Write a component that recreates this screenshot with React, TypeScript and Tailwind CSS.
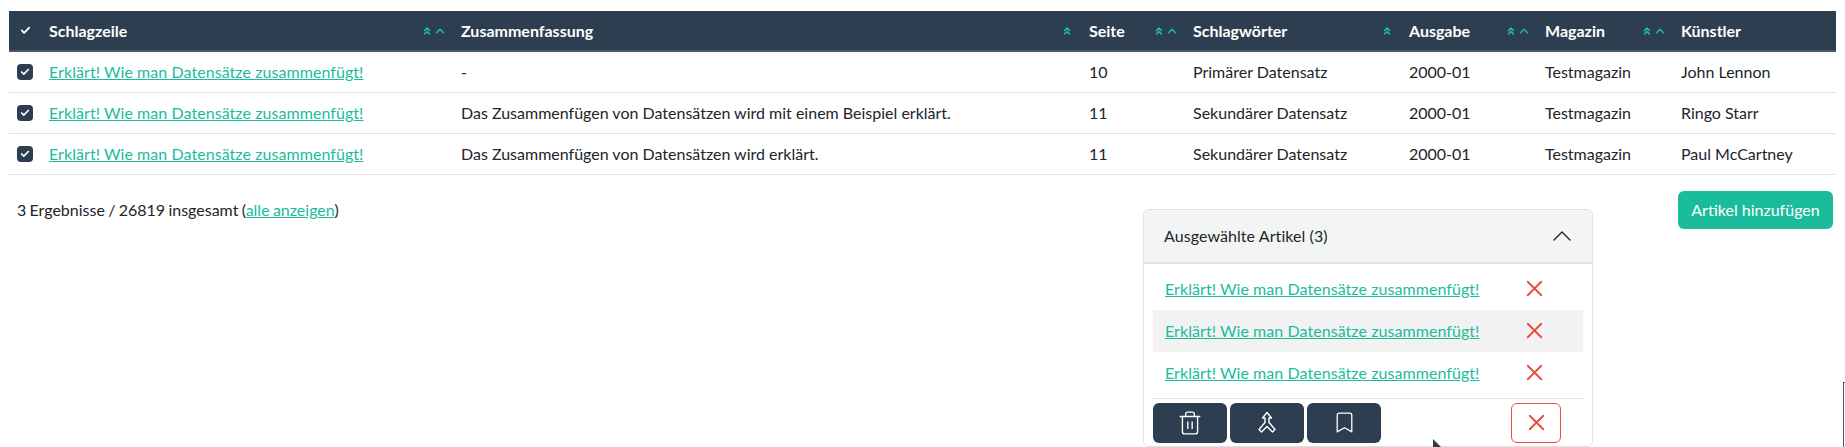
// @ts-nocheck
import React from 'react';
import { Check, ChevronUp, ChevronsUp, Trash2, Bookmark, X } from 'lucide-react';

const rows = [
  { summary: '-', page: '10', tag: 'Primärer Datensatz', artist: 'John Lennon' },
  { summary: 'Das Zusammenfügen von Datensätzen wird mit einem Beispiel erklärt.', page: '11', tag: 'Sekundärer Datensatz', artist: 'Ringo Starr' },
  { summary: 'Das Zusammenfügen von Datensätzen wird erklärt.', page: '11', tag: 'Sekundärer Datensatz', artist: 'Paul McCartney' },
];

const title = 'Erklärt! Wie man Datensätze zusammenfügt!';

function SortIcons({ single }: { single?: boolean }) {
  return (
    <span className={`flex items-center justify-end text-[#1abc9c] ${single ? '' : 'mr-[-2px]'}`}>
      <ChevronsUp size={12} strokeWidth={3.5} />
      {!single && <ChevronUp size={14} strokeWidth={2.5} />}
    </span>
  );
}

function Head({ label, single, last }: { label: string; single?: boolean; last?: boolean }) {
  return (
    <th className="px-2 font-bold text-left text-white">
      <div className="flex items-center justify-between">
        <span>{label}</span>
        {!last && <SortIcons single={single} />}
      </div>
    </th>
  );
}

function MergeIcon() {
  return (
    <svg width="22" height="24" viewBox="0 0 22 24" fill="none" stroke="currentColor" strokeWidth="1.4" strokeLinejoin="round">
      <path d="M11 1.5 L15.5 7 H13 V11.5 L19 18.5 L16.5 21 L11 15.5 L5.5 21 L3 18.5 L9 11.5 V7 H6.5 Z" />
    </svg>
  );
}

export default function App() {
  return (
    <div className="relative h-[447px] overflow-hidden bg-white pt-[11px] px-[9px] font-['Lato',sans-serif] text-[16px] text-[#212529]">
      <table className="w-[1827px] table-fixed border-collapse">
        <colgroup>
          <col className="w-[32px]" />
          <col className="w-[412px]" />
          <col className="w-[628px]" />
          <col className="w-[104px]" />
          <col className="w-[216px]" />
          <col className="w-[136px]" />
          <col className="w-[136px]" />
          <col className="w-[163px]" />
        </colgroup>
        <thead>
          <tr className="h-[40px] bg-[#2c3e50] border-b-2 border-[#4a5a6a]">
            <th className="text-white">
              <Check size={11} strokeWidth={4} className="ml-[11px]" />
            </th>
            <Head label="Schlagzeile" />
            <Head label="Zusammenfassung" single />
            <Head label="Seite" />
            <Head label="Schlagwörter" single />
            <Head label="Ausgabe" />
            <Head label="Magazin" />
            <Head label="Künstler" last />
          </tr>
        </thead>
        <tbody>
          {rows.map((row, i) => (
            <tr key={i} className="h-[41px] border-b border-[#dee2e6]">
              <td>
                <span className="ml-2 flex h-4 w-4 items-center justify-center rounded-[4px] bg-[#2c3e50] text-white">
                  <Check size={10} strokeWidth={4} />
                </span>
              </td>
              <td className="px-2"><a className="text-[#1abc9c] underline tracking-[0.06px]">{title}</a></td>
              <td className="px-2">{row.summary}</td>
              <td className="px-2">{row.page}</td>
              <td className="px-2">{row.tag}</td>
              <td className="px-2">2000-01</td>
              <td className="px-2">Testmagazin</td>
              <td className="px-2">{row.artist}</td>
            </tr>
          ))}
        </tbody>
      </table>

      <div className="flex items-start justify-between pr-[3px] pt-[16px]">
        <p className="pl-2 pt-[7px] [word-spacing:-0.8px]">
          3 Ergebnisse / 26819 insgesamt (<a className="text-[#1abc9c] underline">alle anzeigen</a>)
        </p>
        <div className="flex items-start">
          <div className="mt-[18px] mr-[85px] w-[450px] rounded-[6px] border border-[#dee2e6]">
            <div className="flex h-[52px] items-center justify-between rounded-t-[6px] bg-[#f3f5f5] pl-[20px] pr-[14px]">
              <span className="tracking-[0.08px]">Ausgewählte Artikel (3)</span>
              <ChevronUp size={32} strokeWidth={1} />
            </div>
            <div className="border-t-2 border-[#dee2e6] px-[9px] pt-[4px] pb-[3px]">
              {[0, 1, 2].map((i) => (
                <div key={i} className={`flex h-[42px] items-center pl-[12px] ${i === 1 ? 'bg-[#f2f2f2]' : ''}`}>
                  <a className="w-[356px] text-[#1abc9c] underline tracking-[0.06px]">{title}</a>
                  <X size={27} strokeWidth={1.6} className="text-[#e74c3c]" />
                </div>
              ))}
              <div className="mt-[4px] flex items-center border-t border-[#dee2e6] pt-[4px]">
                <div className="flex gap-[3px]">
                  <button className="flex h-10 w-[74px] items-center justify-center rounded-[6px] bg-[#2c3e50] text-white">
                    <Trash2 size={26} strokeWidth={1.25} />
                  </button>
                  <button className="flex h-10 w-[74px] items-center justify-center rounded-[6px] bg-[#2c3e50] text-white">
                    <MergeIcon />
                  </button>
                  <button className="flex h-10 w-[74px] items-center justify-center rounded-[6px] bg-[#2c3e50] text-white">
                    <Bookmark size={25} strokeWidth={1.25} />
                  </button>
                </div>
                <button className="ml-[130px] flex h-10 w-[50px] items-center justify-center rounded-[6px] border border-[#e74c3c] text-[#e74c3c]">
                  <X size={27} strokeWidth={1.6} />
                </button>
              </div>
            </div>
          </div>
          <button className="h-[38px] w-[155px] rounded-[6px] bg-[#1abc9c] text-white">Artikel hinzufügen</button>
        </div>
      </div>

      {/* mouse pointer and resize corner that were caught in the capture */}
      <svg className="absolute left-[1432px] top-[439px]" width="14" height="8" viewBox="0 0 14 8">
        <path d="M1 0 L9 8 H1 Z" fill="#2c3e50" />
      </svg>
      <div className="absolute left-[1843px] top-[382px] h-[65px] w-[2px] border-l border-t border-[#555555]" />
    </div>
  );
}
